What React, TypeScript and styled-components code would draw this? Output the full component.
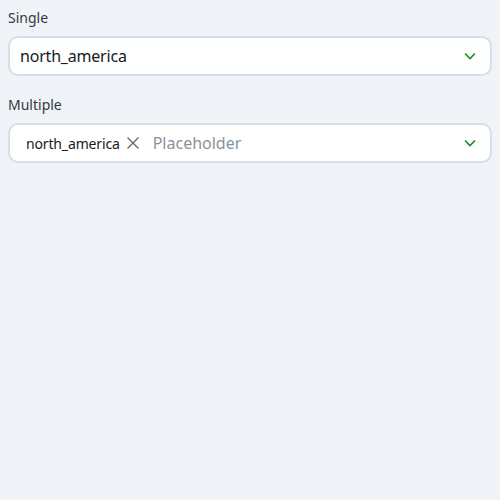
import React from 'react'
import styled, { createGlobalStyle } from 'styled-components'

const GlobalStyle = createGlobalStyle`
  html, body {
    margin: 0;
    padding: 0;
    background: #f0f4f8;
    font-family: 'Noto Sans', 'Open Sans', sans-serif;
  }
`

const Page = styled.div`
  display: flex;
  flex-direction: column;
  gap: 19px;
  padding: 8px 8px;
`

const Field = styled.div`
  display: flex;
  flex-direction: column;
  gap: 8px;
`

const Label = styled.label`
  font-size: 14px;
  line-height: 20px;
  color: #32383e;
`

const SelectBox = styled.div<{ $dense?: boolean }>`
  display: flex;
  align-items: center;
  gap: 8px;
  height: 40px;
  box-sizing: border-box;
  padding: 0 14px 0 ${p => (p.$dense ? '8px' : '10px')};
  background: #fff;
  border: 2px solid #d8dee5;
  border-radius: 10px;
`

const Values = styled.div`
  flex: 1;
  display: flex;
  align-items: center;
  gap: 5px;
  min-width: 0;
`

const Value = styled.span`
  font-size: 16px;
  letter-spacing: -0.2px;
  color: #171a1c;
`

const Chip = styled.span`
  display: inline-flex;
  align-items: center;
  gap: 6px;
  padding: 0 8px;
  font-size: 14px;
  letter-spacing: -0.15px;
  color: #171a1c;
`

const ChipRemove = styled.button`
  display: inline-flex;
  padding: 0;
  border: 0;
  background: none;
  color: #636b74;
  cursor: pointer;
`

const Placeholder = styled.span`
  font-size: 16px;
  color: #8a939c;
`

const Chevron = () => (
  <svg width="12" height="8" viewBox="0 0 12 8" fill="none">
    <path d="M1 1.5l5 5 5-5" stroke="#1f8a1f" strokeWidth="1.6" />
  </svg>
)

const Cross = () => (
  <svg width="14" height="14" viewBox="0 0 14 14" fill="none">
    <path d="M1.5 1.5l11 11M12.5 1.5l-11 11" stroke="currentColor" strokeWidth="1.4" />
  </svg>
)

const App: React.FC = () => (
  <>
    <GlobalStyle />
    <Page>
      <Field>
        <Label>Single</Label>
        <SelectBox>
          <Values>
            <Value>north_america</Value>
          </Values>
          <Chevron />
        </SelectBox>
      </Field>
      <Field>
        <Label>Multiple</Label>
        <SelectBox $dense>
          <Values>
            <Chip>
              north_america
              <ChipRemove aria-label="remove">
                <Cross />
              </ChipRemove>
            </Chip>
            <Placeholder>Placeholder</Placeholder>
          </Values>
          <Chevron />
        </SelectBox>
      </Field>
    </Page>
  </>
)

export default App
